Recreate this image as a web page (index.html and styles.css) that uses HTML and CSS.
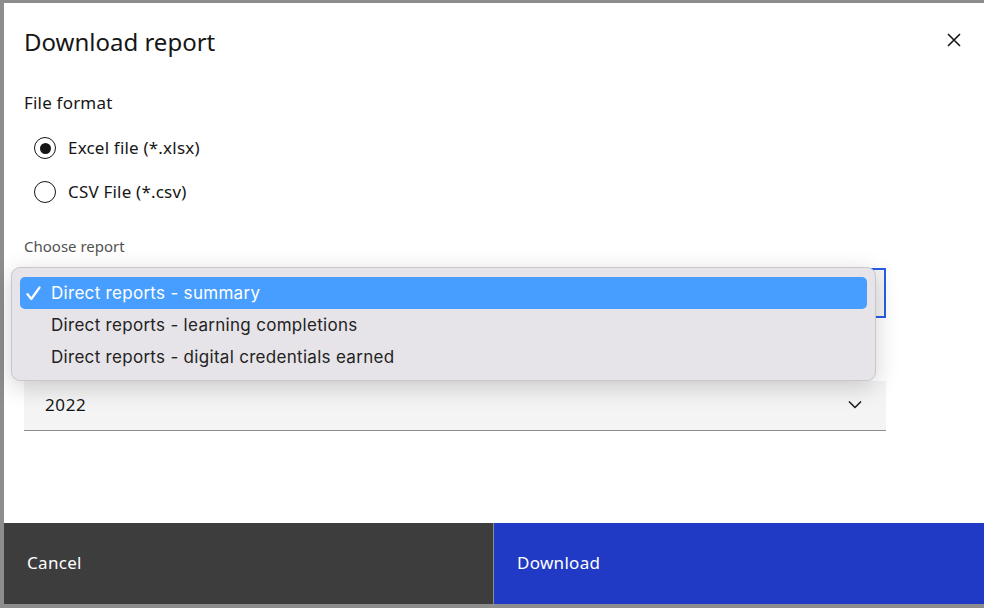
FILE: index.html
```html
<!DOCTYPE html>
<html>
<head>
<meta charset="utf-8">
<link rel="stylesheet" href="styles.css">
</head>
<body>
<div class="backdrop">
  <div class="modal">
    <div class="header">
      <h1 class="title">Download report</h1>
      <button class="close" aria-label="Close">
        <svg width="14" height="14" viewBox="0 0 14 14"><path d="M1 1 L13 13 M13 1 L1 13" stroke="#161616" stroke-width="1.6" fill="none"/></svg>
      </button>
    </div>
    <div class="body">
      <div class="legend">File format</div>
      <div class="radios">
        <label class="radio"><span class="circle checked"></span><span>Excel file (*.xlsx)</span></label>
        <label class="radio"><span class="circle"></span><span>CSV File (*.csv)</span></label>
      </div>
      <div class="field">
        <div class="label">Choose report</div>
        <div class="select focused"></div>
        <div class="popup">
          <div class="opt selected"><span class="check"><svg width="15" height="15" viewBox="0 0 15 15"><path d="M1.5 8.2 L5.3 13 L13.5 1.5" stroke="#ffffff" stroke-width="2.2" fill="none" stroke-linecap="round" stroke-linejoin="round"/></svg></span>Direct reports - summary</div>
          <div class="opt"><span class="check"></span>Direct reports - learning completions</div>
          <div class="opt"><span class="check"></span>Direct reports - digital credentials earned</div>
        </div>
      </div>
      <div class="field second">
        <div class="select"><span class="value">2022</span>
          <svg class="chev" width="14" height="9" viewBox="0 0 14 9"><path d="M1 1.5 L7 7.5 L13 1.5" stroke="#161616" stroke-width="1.5" fill="none"/></svg>
        </div>
      </div>
    </div>
    <div class="footer">
      <button class="btn cancel">Cancel</button>
      <button class="btn primary">Download</button>
    </div>
  </div>
</div>
</body>
</html>
```
FILE: styles.css
```css
html, body {
  margin: 0;
  padding: 0;
  height: 100%;
}
body {
  background: #8d8d8d;
  font-family: "Noto Sans", "Open Sans", sans-serif;
  color: #161616;
  overflow: hidden;
}
.backdrop {
  padding: 3px 0 0 4px;
  height: 100%;
  box-sizing: border-box;
}
.modal {
  background: #ffffff;
  height: 601px;
  display: flex;
  flex-direction: column;
  position: relative;
}
.header {
  display: flex;
  justify-content: space-between;
  align-items: flex-start;
  padding: 23px 23px 0 20px;
}
.title {
  margin: 0;
  font-weight: 400;
  font-size: 24px;
  line-height: 32px;
  letter-spacing: 0;
}
.close {
  background: none;
  border: none;
  padding: 0;
  margin-top: 7px;
  width: 14px;
  height: 14px;
  display: flex;
}
.body {
  padding: 0 0 0 20px;
  flex: 1;
}
.legend {
  margin-top: 35px;
  font-size: 17px;
  letter-spacing: 0.2px;
  line-height: 20px;
}
.radios {
  display: flex;
  flex-direction: column;
  gap: 20px;
  margin-top: 23px;
  padding-left: 10px;
}
.radio {
  display: flex;
  align-items: center;
  gap: 12px;
  font-size: 17px;
  letter-spacing: 0.2px;
  line-height: 24px;
}
.circle {
  width: 22px;
  height: 22px;
  border: 1px solid #161616;
  border-radius: 50%;
  box-sizing: border-box;
  display: flex;
  align-items: center;
  justify-content: center;
}
.circle.checked::after {
  content: "";
  width: 11px;
  height: 11px;
  border-radius: 50%;
  background: #161616;
}
.field {
  position: relative;
  width: 862px;
}
.label {
  font-size: 15px;
  line-height: 18px;
  color: #525252;
  margin-bottom: 13px;
}
.radios + .field { margin-top: 33px; }
.select {
  height: 50px;
  background: #f4f4f4;
  box-sizing: border-box;
  border-bottom: 1px solid #8d8d8d;
  display: flex;
  align-items: center;
  justify-content: space-between;
  padding: 0 24px 2px 21px;
  font-size: 17px;
  letter-spacing: 0.6px;
}
.select.focused {
  border: 2px solid #2a5ce6;
}
.second {
  margin-top: 63px;
}
.popup {
  position: absolute;
  left: -13px;
  top: 30px;
  width: 865px;
  box-sizing: border-box;
  background: #e6e4e8;
  border: 1px solid #c9c7cc;
  border-radius: 9px;
  padding: 9px 8px 7px 8px;
  box-shadow: 0 6px 24px rgba(0,0,0,0.18);
  font-family: "Inter", "Noto Sans", sans-serif;
  font-size: 17px;
  letter-spacing: 0.3px;
  color: #222222;
  z-index: 5;
}
.opt {
  height: 32px;
  display: flex;
  align-items: center;
  padding-left: 6px;
  border-radius: 5px;
}
.opt.selected {
  background: #479efe;
  color: #ffffff;
}
.check {
  width: 25px;
  display: flex;
  align-items: center;
}
.footer {
  display: flex;
  height: 81px;
}
.btn {
  border: none;
  margin: 0;
  font-family: inherit;
  font-size: 17px;
  letter-spacing: 0.3px;
  color: #ffffff;
  text-align: left;
  display: flex;
  align-items: center;
  padding: 0 0 2px 23px;
  box-sizing: border-box;
}
.cancel {
  background: #3d3d3d;
  width: 490px;
  border-right: 1px solid #8d8d8d;
}
.primary {
  background: #213ac5;
  flex: 1;
}
```
